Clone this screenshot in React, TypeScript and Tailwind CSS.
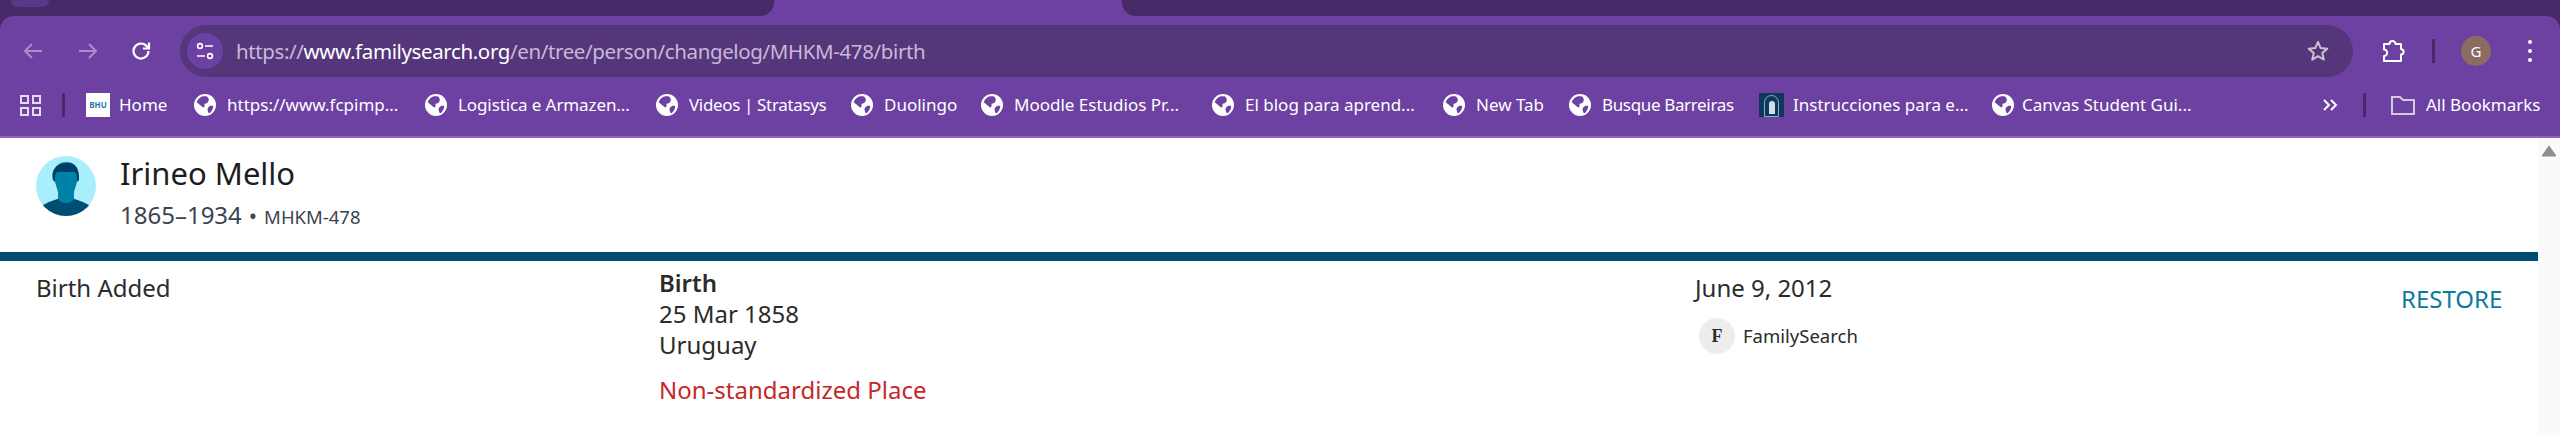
const bookmarks = [
  { label: 'https://www.fcpimp...', width: 'w-[231px]', tracking: '' },
  { label: 'Logistica e Armazen...', width: 'w-[231px]', tracking: 'tracking-[-0.1px]' },
  { label: 'Videos | Stratasys', width: 'w-[195px]', tracking: 'tracking-[-0.35px]' },
  { label: 'Duolingo', width: 'w-[130px]', tracking: '' },
  { label: 'Moodle Estudios Pr...', width: 'w-[231px]', tracking: '' },
  { label: 'El blog para aprend...', width: 'w-[231px]', tracking: '' },
  { label: 'New Tab', width: 'w-[126px]', tracking: '' },
  { label: 'Busque Barreiras', width: 'w-[190px]', tracking: 'tracking-[-0.35px]' },
]

const Globe = () => (
  <svg className="h-[22px] w-[22px] shrink-0" viewBox="0 0 22 22">
    <circle cx="11" cy="11" r="11" fill="#fff" />
    <path d="M8 2.6C5.6 3.6 3.6 5.6 2.7 8.2L8.5 13c1 .8 2 .3 2-1V9.8c2 0 3.7-1 4.2-3.2.3-1.4-.2-3-1.7-4.2-1.6-.4-3.4-.3-5 .2z" fill="#6d41a1" />
    <path d="M19.3 12.2c-1.2-.6-2.6-.6-3.7 0-1.6.8-2.3 2.4-2 4 .2 1 .7 2 1.4 3.2 2.4-1.4 4-4 4.3-7.2z" fill="#6d41a1" />
  </svg>
)

const TabStrip = () => (
  <div className="flex h-4 bg-[#6d41a1]">
    <div className="relative w-[774px] rounded-br-[14px] bg-[#472b68]">
      <div className="absolute left-[11px] top-0 h-[7px] w-[38px] rounded-b-[8px] bg-[#5b378a]" />
    </div>
    <div className="w-[348px]" />
    <div className="flex-1 rounded-bl-[14px] bg-[#472b68]" />
  </div>
)

const AddressBar = () => (
  <div className="flex h-[52px] w-[2173px] items-center rounded-full bg-[#56367a] pl-[7px] pr-[23px]">
    <div className="flex h-9 w-9 items-center justify-center rounded-full bg-[#6d41a1]">
      <svg width="20" height="20" viewBox="0 0 20 20" fill="none" stroke="#fff" strokeWidth="1.6">
        <circle cx="5" cy="5" r="2.4" />
        <path d="M10 5h8M2 15h8" />
        <circle cx="15" cy="15" r="2.4" />
      </svg>
    </div>
    <div className="ml-[13px] flex-1 text-[20.5px] tracking-[-0.38px] text-[#c7b8d8]">
      https://<span className="text-white">www.familysearch.org</span>/en/tree/person/changelog/MHKM-478/birth
    </div>
    <svg width="24" height="24" viewBox="0 0 24 24" fill="none" stroke="#c9c2d2" strokeWidth="2" strokeLinejoin="round">
      <path d="M12 3l2.7 6.1 6.6.6-5 4.4 1.5 6.5L12 17.2l-5.8 3.4 1.5-6.5-5-4.4 6.6-.6z" />
    </svg>
  </div>
)

const Toolbar = () => (
  <div className="flex h-[61px] items-start pt-[9px]">
    <div className="flex h-[52px] w-[180px] items-center">
      <svg className="ml-[22px]" width="22" height="22" viewBox="0 0 22 22" fill="none" stroke="#a98fc9" strokeWidth="2">
        <path d="M20 11H3M10 4l-7 7 7 7" />
      </svg>
      <svg className="ml-[33px]" width="22" height="22" viewBox="0 0 22 22" fill="none" stroke="#a98fc9" strokeWidth="2">
        <path d="M2 11h17M12 4l7 7-7 7" />
      </svg>
      <svg className="ml-[31px]" width="22" height="22" viewBox="0 0 22 22" fill="none" stroke="#fff" strokeWidth="2.2">
        <path d="M18.5 11a7.5 7.5 0 1 1-2.3-5.4L18.5 8" />
        <path d="M19 2.5v6h-6" />
      </svg>
    </div>
    <AddressBar />
    <div className="flex h-[52px] flex-1 items-center">
      <svg className="ml-[27px]" width="26" height="26" viewBox="0 0 26 26" fill="none" stroke="#fff" strokeWidth="2" strokeLinejoin="round">
        <path d="M4 6h5.5a3 3 0 0 1 6 0H21v5.2a2.6 2.6 0 0 1 0 5.2V23H4v-5a3.2 3.2 0 0 0 0-6.4z" />
      </svg>
      <div className="ml-[26px] h-6 w-[3px] bg-[#472b68]" />
      <div className="ml-[26px] flex h-[30px] w-[30px] items-center justify-center rounded-full bg-[#8a6d60] text-[15px] text-white">
        G
      </div>
      <div className="ml-[37px] flex flex-col gap-[5px]">
        <div className="h-1 w-1 rounded-full bg-white" />
        <div className="h-1 w-1 rounded-full bg-white" />
        <div className="h-1 w-1 rounded-full bg-white" />
      </div>
    </div>
  </div>
)

const BookmarkBar = () => (
  <div className="flex h-[61px] items-center border-b-2 border-[#8d63bf] pb-[3px] text-[17px] text-white">
    <div className="ml-5 grid h-[21px] w-[21px] grid-cols-2 gap-[3px]">
      <div className="border-2 border-[#e4dcee]" />
      <div className="border-2 border-[#e4dcee]" />
      <div className="border-2 border-[#e4dcee]" />
      <div className="border-2 border-[#e4dcee]" />
    </div>
    <div className="ml-[21px] h-6 w-[3px] bg-[#472b68]" />
    <div className="ml-[21px] flex w-[108px] items-center gap-[9px]">
      <div className="flex h-6 w-6 items-center justify-center bg-white text-[8px] font-bold text-[#2a7ab0]">BHU</div>
      Home
    </div>
    {bookmarks.map((bookmark) => (
      <div key={bookmark.label} className={`flex items-center gap-[11px] ${bookmark.width} ${bookmark.tracking}`}>
        <Globe />
        <span className="whitespace-nowrap">{bookmark.label}</span>
      </div>
    ))}
    <div className="flex w-[233px] items-center gap-[9px]">
      <div className="flex h-6 w-[25px] items-end justify-center bg-[#0d3a5c] pt-[2px]">
        <div className="h-full w-[15px] rounded-t-full border border-[#8fabbf] pt-[5px]">
          <div className="mx-auto h-[13px] w-[6px] rounded-t-full bg-[#d5dde3]" />
        </div>
      </div>
      <span className="whitespace-nowrap">Instrucciones para e...</span>
    </div>
    <div className="flex w-[330px] items-center gap-[8px]">
      <Globe />
      <span className="whitespace-nowrap">Canvas Student Gui...</span>
    </div>
    <svg width="16" height="14" viewBox="0 0 16 14" fill="none" stroke="#fff" strokeWidth="2">
      <path d="M2 2l5 5-5 5M9 2l5 5-5 5" />
    </svg>
    <div className="ml-[25px] h-6 w-[3px] bg-[#472b68]" />
    <svg className="ml-[24px]" width="26" height="22" viewBox="0 0 26 22" fill="none" stroke="#d3cadf" strokeWidth="2">
      <path d="M2 3h8l3 3h11v14H2z" />
    </svg>
    <span className="ml-[10px] whitespace-nowrap">All Bookmarks</span>
  </div>
)

const PersonAvatar = () => (
  <svg width="60" height="60" viewBox="0 0 60 60">
    <clipPath id="avatarClip">
      <circle cx="30" cy="30" r="30" />
    </clipPath>
    <g clipPath="url(#avatarClip)">
      <rect width="60" height="60" fill="#a8effb" />
      <path d="M7 49c7-4 13-5 16-7h14c3 2 9 3 16 7v11H7z" fill="#004d73" />
      <path d="M22 35h16v8c-2 3-5 4-8 4s-6-1-8-4z" fill="#0081a8" />
      <path d="M18 18c0-9 6-12 13-12 6 0 11 4 11 12 0 3 0 6-1 8l-3 10c-2 2-5 4-8 4s-6-2-8-4l-3-10c-1-2-1-5-1-8z" fill="#0081a8" />
      <path d="M17 24c-2-8 1-16 13-17 8-1 14 4 13 17l-2 2c0-5 0-8-2-10H21c-2 2-2 5-2 10z" fill="#003f68" />
    </g>
  </svg>
)

const App = () => (
  <div className="flex h-[435px] w-[2560px] flex-col overflow-hidden bg-white font-['Noto_Sans',sans-serif]">
    <header className="bg-[#472b68]">
      <TabStrip />
      <div className="rounded-t-[14px] bg-[#6d41a1]">
        <Toolbar />
        <BookmarkBar />
      </div>
    </header>
    <div className="flex flex-1">
      <main className="w-[2538px]">
        <div className="flex h-[114px] items-start pl-9 pt-[18px]">
          <PersonAvatar />
          <div className="ml-6 -mt-[2px]">
            <h1 className="text-[31px] leading-[38px] text-[#1d1d1d]">Irineo Mello</h1>
            <div className="mt-[7px] flex items-baseline leading-[32px] text-[#3a4450]">
              <span className="text-[24px]">1865–1934</span>
              <span className="ml-[7px] text-[22px]">•</span>
              <span className="ml-[7px] text-[18.5px]">MHKM-478</span>
            </div>
          </div>
        </div>
        <div className="h-[9px] bg-[#004c72]" />
        <div className="flex text-[24px] text-[#2b2b2b]">
          <div className="w-[659px] pl-9 pt-[11px] leading-[32px]">Birth Added</div>
          <div className="w-[1036px] pt-[6px] leading-[31px]">
            <div className="font-semibold">Birth</div>
            <div>25 Mar 1858</div>
            <div>Uruguay</div>
            <div className="mt-[14px] text-[#c62828]">Non-standardized Place</div>
          </div>
          <div className="w-[706px] pt-[11px]">
            <div className="leading-[32px]">June 9, 2012</div>
            <div className="ml-1 mt-[14px] flex items-center gap-2">
              <div className="flex h-9 w-9 items-center justify-center rounded-full bg-[#eceeee] font-['Liberation_Serif',serif] text-[18px] font-bold">
                F
              </div>
              <span className="text-[18.5px]">FamilySearch</span>
            </div>
          </div>
          <div className="pt-[22px] leading-[32px] text-[#0b7a9c]">RESTORE</div>
        </div>
      </main>
      <aside className="flex-1 bg-[#fafafa] pt-[7px]">
        <svg className="mx-auto" width="16" height="12" viewBox="0 0 16 12">
          <path d="M8 1l7 10H1z" fill="#8e8e8e" stroke="#8e8e8e" strokeLinejoin="round" />
        </svg>
      </aside>
    </div>
  </div>
)

export default App
